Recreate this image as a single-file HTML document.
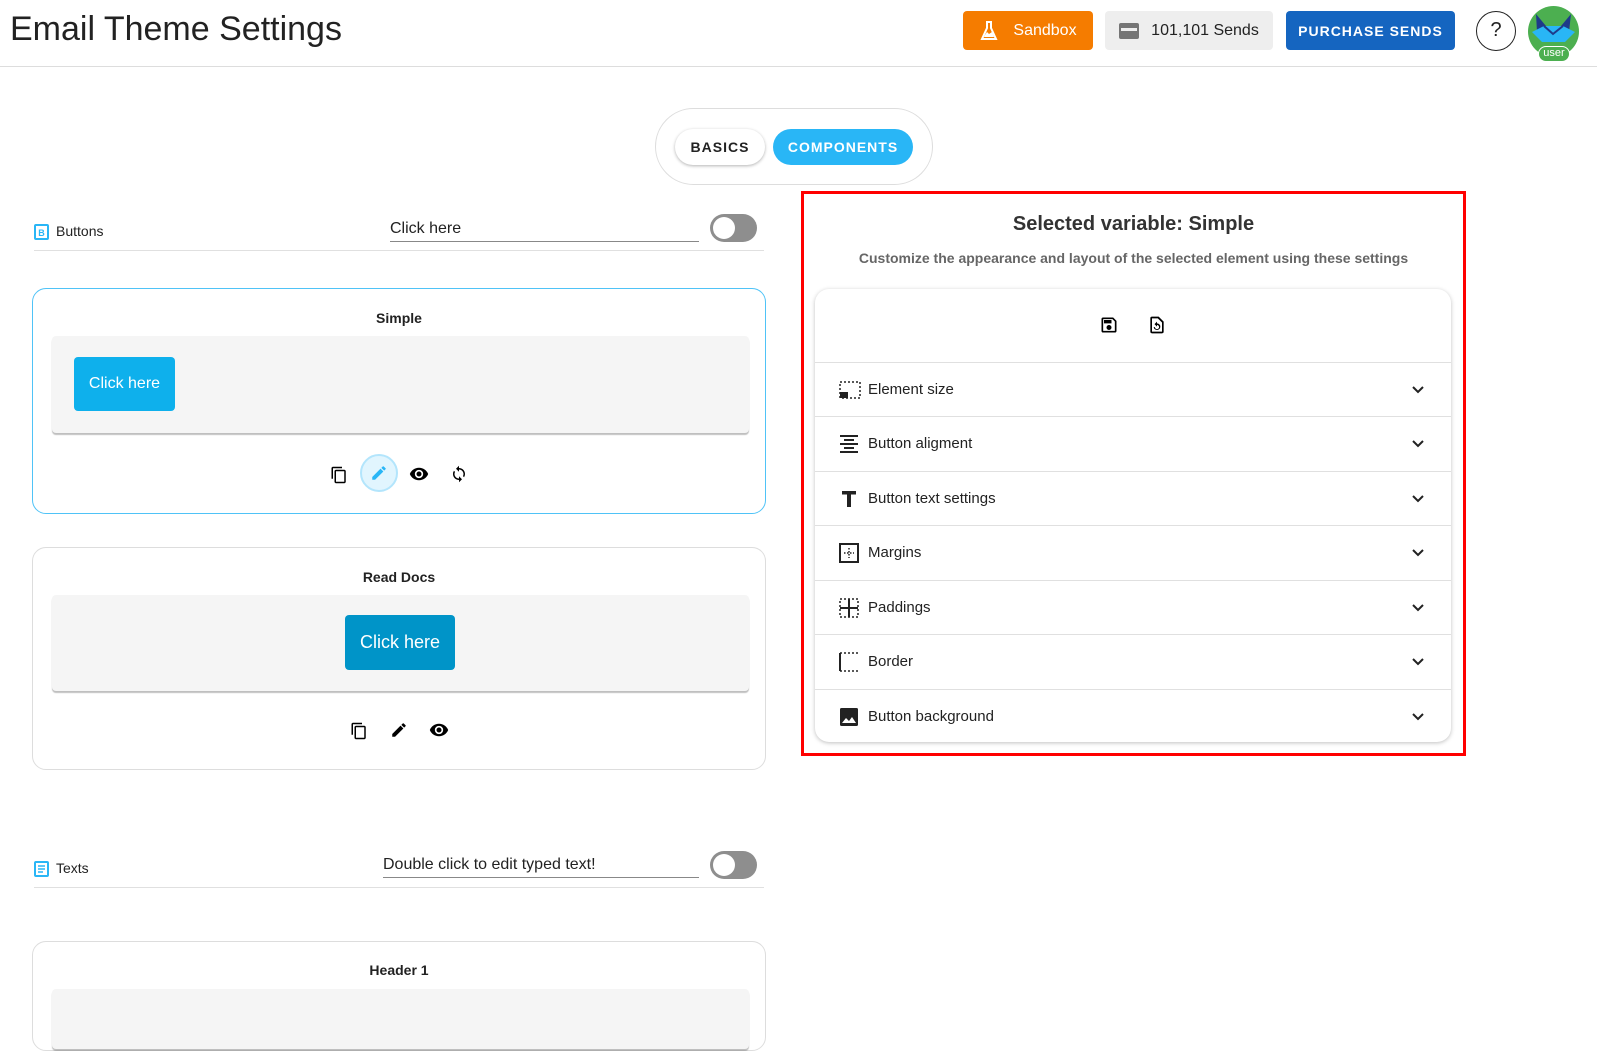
<!DOCTYPE html>
<html><head><meta charset="utf-8"><style>
*{box-sizing:border-box;margin:0;padding:0}
body{width:1597px;height:993px;overflow:hidden;background:#fff;font-family:"Liberation Sans",sans-serif;color:#222;position:relative}
.a{position:absolute}
.btn{position:absolute;border-radius:4px;display:flex;align-items:center;justify-content:center;font-size:16px}
.card{position:absolute;left:32px;width:734px;border:1px solid #ddd;border-radius:14px;background:#fff}
.gray{position:absolute;left:19px;width:697px;background:#f5f5f5;border-radius:4px;box-shadow:0 2px 1px rgba(0,0,0,.25)}
.ctitle{position:absolute;width:100%;text-align:center;font-weight:bold;font-size:14px}
.row{position:absolute;left:0;width:100%;height:54px;border-top:1px solid #e0e0e0;display:flex;align-items:center;font-size:15px;color:#222}
.row svg.i{position:absolute;left:24px}
.row span{position:absolute;left:53px}
.row svg.c{position:absolute;right:26px}
.tog{position:absolute;width:47px;height:28px;border-radius:14px;background:#8e8e8e}
.tog:after{content:"";position:absolute;left:3px;top:3px;width:22px;height:22px;border-radius:50%;background:#fff}
</style></head><body>
<div class="a" style="left:10px;top:10px;font-size:34px;color:#222">Email Theme Settings</div>
<div class="a" style="left:0;top:66px;width:1597px;height:1px;background:#ddd"></div>

<div class="btn" style="left:963px;top:11px;width:130px;height:39px;background:#f57c00;color:#fff">
<svg width="20" height="22" viewBox="0 0 20 22" style="margin-right:14px"><path d="M7 2h6M8 2v6L3 19h14L12 8V2" fill="none" stroke="#fff" stroke-width="2"/><path d="M6 15l2-3 2 2 3-2 2 5H5z" fill="#fff"/></svg>Sandbox</div>
<div class="btn" style="left:1105px;top:11px;width:168px;height:39px;background:#eee;color:#222">
<svg width="20" height="18" viewBox="0 0 20 18" style="margin-right:12px"><rect x="0" y="1" width="20" height="16" rx="2" fill="#757575"/><rect x="2" y="6" width="16" height="3" fill="#eee"/></svg>101,101 Sends</div>
<div class="btn" style="left:1286px;top:11px;width:169px;height:39px;background:#1565c0;color:#fff;font-size:14px;letter-spacing:1px;font-weight:bold">PURCHASE SENDS</div>
<div class="a" style="left:1476px;top:11px;width:40px;height:40px;border:1.5px solid #222;border-radius:50%;text-align:center;line-height:37px;font-size:20px">?</div>
<div class="a" style="left:1528px;top:6px;width:51px;height:51px;border-radius:50%;background:#4caf50;overflow:hidden">
<svg width="51" height="51" viewBox="0 0 51 51"><path d="M8 8l10 12h15l10-12-2 18-16 10-16-10z" fill="#1e3a8a"/><path d="M4 26l12-6h19l12 6-10 10H14z" fill="#29b6f6"/><path d="M16 20l9 8 10-8" fill="none" stroke="#1e3a8a" stroke-width="2"/></svg></div>
<div class="a" style="left:1538px;top:46px;width:32px;height:16px;border-radius:8px;background:#4caf50;border:1.5px solid #fff;color:#fff;font-size:11px;text-align:center;line-height:13px">user</div>

<div class="a" style="left:655px;top:108px;width:278px;height:77px;border:1px solid #ddd;border-radius:39px"></div>
<div class="a" style="left:675px;top:129px;width:90px;height:36px;border-radius:18px;background:#fff;box-shadow:0 1px 3px rgba(0,0,0,.3);font-size:14px;font-weight:bold;letter-spacing:1px;text-align:center;line-height:36px">BASICS</div>
<div class="a" style="left:773px;top:129px;width:140px;height:36px;border-radius:18px;background:#29b6f6;color:#fff;font-size:14px;font-weight:bold;letter-spacing:1px;text-align:center;line-height:36px">COMPONENTS</div>

<svg class="a" style="left:34px;top:224px" width="15" height="16" viewBox="0 0 15 16"><rect x="1" y="1" width="13" height="14" rx="1" fill="none" stroke="#29b6f6" stroke-width="2"/><text x="7.5" y="12" font-size="9" font-weight="bold" fill="#29b6f6" text-anchor="middle" font-family="Liberation Sans">B</text></svg>
<div class="a" style="left:56px;top:223px;font-size:14px">Buttons</div>
<div class="a" style="left:390px;top:220px;width:309px;height:22px;border-bottom:1px solid #888;font-size:16px">Click here</div>
<div class="tog" style="left:710px;top:214px"></div>
<div class="a" style="left:34px;top:250px;width:730px;height:1px;background:#e0e0e0"></div>

<div class="card" style="top:288px;height:226px;border-color:#4fc3f7">
<div class="ctitle" style="top:21px">Simple</div>
<div class="gray" style="top:47px;height:97px">
<div class="btn" style="left:22px;top:21px;width:101px;height:54px;background:#0eb0ec;color:#fff;font-size:16px">Click here</div></div>
<svg class="a" style="left:297px;top:176px" width="18" height="20" viewBox="0 0 24 24"><path d="M16 1H4c-1.1 0-2 .9-2 2v14h2V3h12V1zm3 4H8c-1.1 0-2 .9-2 2v14c0 1.1.9 2 2 2h11c1.1 0 2-.9 2-2V7c0-1.1-.9-2-2-2zm0 16H8V7h11v14z"/></svg>
<div class="a" style="left:327px;top:165px;width:38px;height:38px;border-radius:50%;background:#e1f5fe;border:2px solid #b3e5fc"></div>
<svg class="a" style="left:337px;top:175px" width="18" height="18" viewBox="0 0 24 24"><path fill="#29b6f6" d="M3 17.25V21h3.75L17.81 9.94l-3.75-3.75L3 17.25zM20.71 7.04a1 1 0 000-1.41l-2.34-2.34a1 1 0 00-1.41 0l-1.83 1.830 3.75 3.75 1.83-1.83z"/></svg>
<svg class="a" style="left:376px;top:175px" width="20" height="20" viewBox="0 0 24 24"><path d="M12 4.5C7 4.5 2.7 7.6 1 12c1.7 4.4 6 7.5 11 7.5s9.3-3.1 11-7.5c-1.7-4.4-6-7.5-11-7.5zM12 17a5 5 0 110-10 5 5 0 010 10zm0-8a3 3 0 100 6 3 3 0 000-6z"/></svg>
<svg class="a" style="left:417px;top:175px" width="18" height="20" viewBox="0 0 24 24"><path d="M12 4V1L8 5l4 4V6c3.3 0 6 2.7 6 6 0 1-.25 2-.7 2.8l1.46 1.46A7.930 7.930 0 0020 12c0-4.4-3.600-8-8-8zm0 14c-3.3 0-6-2.7-6-6 0-1 .25-2 .7-2.8L5.24 7.74A7.93 7.93 0 004 12c0 4.4 3.6 8 8 8v3l4-4-4-4v3z"/></svg>
</div>

<div class="card" style="top:547px;height:223px">
<div class="ctitle" style="top:21px">Read Docs</div>
<div class="gray" style="top:47px;height:96px">
<div class="btn" style="left:293px;top:20px;width:110px;height:55px;background:#0094c8;color:#fff;font-size:18px">Click here</div></div>
<svg class="a" style="left:317px;top:173px" width="18" height="20" viewBox="0 0 24 24"><path d="M16 1H4c-1.1 0-2 .9-2 2v14h2V3h12V1zm3 4H8c-1.1 0-2 .9-2 2v14c0 1.1.9 2 2 2h11c1.1 0 2-.9 2-2V7c0-1.1-.9-2-2-2zm0 16H8V7h11v14z"/></svg>
<svg class="a" style="left:357px;top:173px" width="18" height="18" viewBox="0 0 24 24"><path d="M3 17.25V21h3.75L17.81 9.94l-3.75-3.75L3 17.25zM20.71 7.04a1 1 0 000-1.41l-2.34-2.34a1 1 0 00-1.41 0l-1.83 1.83 3.75 3.75 1.83-1.83z"/></svg>
<svg class="a" style="left:396px;top:172px" width="20" height="20" viewBox="0 0 24 24"><path d="M12 4.5C7 4.5 2.7 7.6 1 12c1.7 4.4 6 7.5 11 7.5s9.3-3.1 11-7.5c-1.7-4.4-6-7.5-11-7.5zM12 17a5 5 0 110-10 5 5 0 010 10zm0-8a3 3 0 100 6 3 3 0 000-6z"/></svg>
</div>

<svg class="a" style="left:34px;top:861px" width="15" height="16" viewBox="0 0 15 16"><rect x="1" y="1" width="13" height="14" rx="1" fill="none" stroke="#29b6f6" stroke-width="2"/><path d="M4 5h7M4 8h7M4 11h5" stroke="#29b6f6" stroke-width="1.5"/></svg>
<div class="a" style="left:56px;top:860px;font-size:14px">Texts</div>
<div class="a" style="left:383px;top:856px;width:316px;height:22px;border-bottom:1px solid #888;font-size:16px">Double click to edit typed text!</div>
<div class="tog" style="left:710px;top:851px"></div>
<div class="a" style="left:34px;top:887px;width:730px;height:1px;background:#e0e0e0"></div>
<div class="card" style="top:941px;height:110px">
<div class="ctitle" style="top:20px">Header 1</div>
<div class="gray" style="top:47px;height:60px"></div></div>

<div class="a" style="left:801px;top:191px;width:665px;height:565px;border:3px solid #f00"></div>
<div class="a" style="left:801px;top:213px;width:665px;text-align:center;font-size:20px;font-weight:bold;color:#333">Selected variable: Simple</div>
<div class="a" style="left:801px;top:250px;width:665px;text-align:center;font-size:14px;font-weight:bold;color:#666">Customize the appearance and layout of the selected element using these settings</div>
<div class="a" style="left:815px;top:289px;width:636px;height:453px;border-radius:14px;background:#fff;box-shadow:0 1px 4px rgba(0,0,0,.25);overflow:hidden">
<svg class="a" style="left:284px;top:26px" width="20" height="20" viewBox="0 0 24 24"><path d="M17 3H5a2 2 0 00-2 2v14a2 2 0 002 2h14a2 2 0 002-2V7l-4-4zm2 16H5V5h11.17L19 7.83V19zm-7-7a3 3 0 100 6 3 3 0 000-6zM6 6h9v4H6z"/></svg>
<svg class="a" style="left:332px;top:25px" width="20" height="22" viewBox="0 0 24 24"><path d="M14 2H6a2 2 0 00-2 2v16a2 2 0 002 2h12a2 2 0 002-2V8l-6-6zm4 18H6V4h7l5 5v11z"/><path d="M12 10V8l-3 3 3 3v-2a2.5 2.5 0 11-2.5 2.5H8A4 4 0 1012 10z"/></svg>
<div class="row" style="top:73px"><svg class="i" width="22" height="18" viewBox="0 0 22 18"><path d="M1 1h20v16H1z" fill="none" stroke="#222" stroke-width="1.5" stroke-dasharray="2 2"/><rect x="1" y="11" width="8" height="6" fill="#222"/></svg><span>Element size</span><svg class="c" width="14" height="10" viewBox="0 0 14 10"><path d="M2 2l5 5 5-5" fill="none" stroke="#222" stroke-width="2"/></svg></div>
<div class="row" style="top:127px"><svg class="i" width="20" height="18" viewBox="0 0 20 18"><path d="M1 1h18M5 5h10M1 9h18M5 13h10M1 17h18" stroke="#222" stroke-width="2"/></svg><span>Button aligment</span><svg class="c" width="14" height="10" viewBox="0 0 14 10"><path d="M2 2l5 5 5-5" fill="none" stroke="#222" stroke-width="2"/></svg></div>
<div class="row" style="top:182px"><svg class="i" width="20" height="18" viewBox="0 0 20 18"><path d="M3 1h14v3.5h-5V17H8V4.5H3z" fill="#222"/></svg><span>Button text settings</span><svg class="c" width="14" height="10" viewBox="0 0 14 10"><path d="M2 2l5 5 5-5" fill="none" stroke="#222" stroke-width="2"/></svg></div>
<div class="row" style="top:236px"><svg class="i" width="20" height="20" viewBox="0 0 20 20"><rect x="1" y="1" width="18" height="18" fill="none" stroke="#222" stroke-width="2"/><path d="M10 5v10M5 10h10" stroke="#222" stroke-width="1.5" stroke-dasharray="1.5 1.5"/></svg><span>Margins</span><svg class="c" width="14" height="10" viewBox="0 0 14 10"><path d="M2 2l5 5 5-5" fill="none" stroke="#222" stroke-width="2"/></svg></div>
<div class="row" style="top:291px"><svg class="i" width="20" height="20" viewBox="0 0 20 20"><rect x="1" y="1" width="18" height="18" fill="none" stroke="#222" stroke-width="1.5" stroke-dasharray="2 2"/><path d="M10 1v18M1 10h18" stroke="#222" stroke-width="2"/></svg><span>Paddings</span><svg class="c" width="14" height="10" viewBox="0 0 14 10"><path d="M2 2l5 5 5-5" fill="none" stroke="#222" stroke-width="2"/></svg></div>
<div class="row" style="top:345px"><svg class="i" width="20" height="20" viewBox="0 0 20 20"><path d="M19 1H1v18h18" fill="none" stroke="#222" stroke-width="1.5" stroke-dasharray="2 2"/><path d="M1 1v18" stroke="#222" stroke-width="2"/></svg><span>Border</span><svg class="c" width="14" height="10" viewBox="0 0 14 10"><path d="M2 2l5 5 5-5" fill="none" stroke="#222" stroke-width="2"/></svg></div>
<div class="row" style="top:400px"><svg class="i" width="20" height="20" viewBox="0 0 20 20"><rect x="1" y="1" width="18" height="18" rx="1.5" fill="#222"/><path d="M3 16l4-5 3 3 3-4 4 6z" fill="#fff"/></svg><span>Button background</span><svg class="c" width="14" height="10" viewBox="0 0 14 10"><path d="M2 2l5 5 5-5" fill="none" stroke="#222" stroke-width="2"/></svg></div>
</div>
</body></html>
